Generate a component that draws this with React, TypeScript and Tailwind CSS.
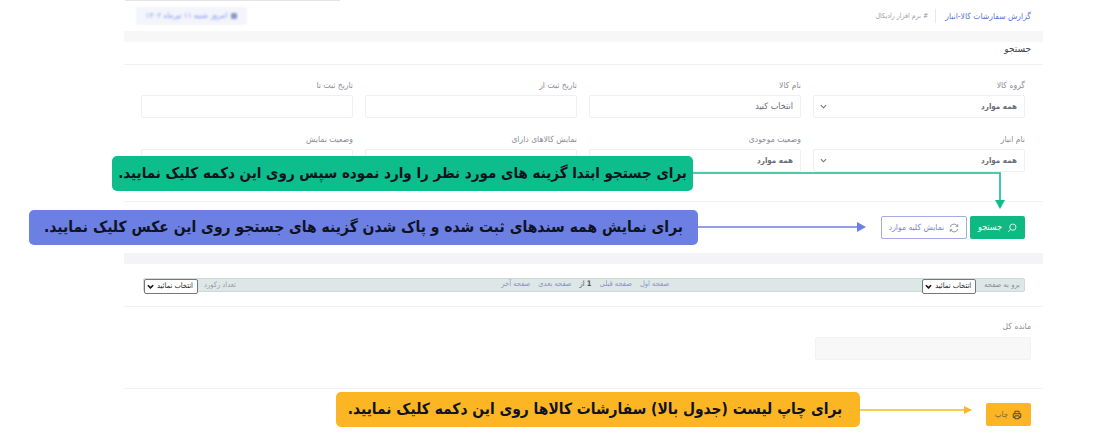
import React from "react";

function Chevron() {
  return (
    <svg width="7" height="5" viewBox="0 0 8 5" fill="none" stroke="#6b7280" strokeWidth="1.2">
      <path d="M1 1l3 3 3-3" />
    </svg>
  );
}

function Field({ label, value, select }: { label: string; value?: string; select?: boolean }) {
  return (
    <div className="flex flex-col">
      <div className="h-[16px] text-[8.5px] leading-[12px] text-[#8b8d97]">{label}</div>
      <div className="flex h-[23px] items-center justify-between rounded-[2px] border border-[#eef0f3] bg-white pr-[7px] pl-[6px] font-medium text-[#6a6d78]">
        <span className={value === "همه موارد" ? "text-[8px] font-bold" : "text-[9px]"}>{value}</span>
        {select && <Chevron />}
      </div>
    </div>
  );
}

function Sel() {
  return (
    <div className="flex h-[15px] w-[54px] items-center justify-between rounded-[2px] border border-[#777] bg-white pr-[4px] pl-[2px] text-[7.5px] whitespace-nowrap text-[#222]">
      <span>انتخاب نمائید</span>
      <svg width="7" height="5" viewBox="0 0 8 5" fill="none" stroke="#111" strokeWidth="1.8"><path d="M1 1l3 3 3-3" /></svg>
    </div>
  );
}

function Arrow({ d, head, color }: { d: string; head: string; color: string }) {
  return (
    <>
      <path d={d} fill="none" stroke={color} strokeWidth="1.6" />
      <path d={head} fill={color} />
    </>
  );
}

function Callout({ className, children }: { className: string; children: React.ReactNode }) {
  return (
    <div className={`absolute flex h-[35px] items-center justify-center rounded-[5px] font-bold whitespace-nowrap text-[#10131f] ${className}`}>
      {children}
    </div>
  );
}

export default function App() {
  return (
    <div
      dir="rtl"
      className="relative h-[433px] w-[1100px] overflow-hidden bg-white font-['DejaVu_Sans_Condensed','DejaVu_Sans',sans-serif]"
    >
      <div className="absolute top-0 left-[125px] h-px w-[215px] bg-[#e4e4e6]" />
      <div className="mr-[57px] ml-[124px] flex flex-col">
        {/* header */}
        <div className="flex h-[31px] items-center justify-between pr-[12px] pl-[12px]">
          <div className="flex items-center pt-[1px]">
            <span className="text-[8.5px] font-medium text-[#5d78d8]">گزارش سفارشات کالا-انبار</span>
            <span className="mr-[9px] ml-[7px] h-[14px] w-px bg-[#e8e9ee]" />
            <span className="text-[7px] text-[#9a9ca6]"># نرم افزار رادیکال</span>
          </div>
          <div className="flex h-[18px] w-[111px] items-center justify-center gap-[4px] rounded-[2px] bg-[#f4f5fb] text-[8px] text-[#7f97ee] blur-[1px]">
            <span className="h-[6px] w-[6px] rounded-[1px] bg-[#8d96c8]" />
            <span>امروز شنبه ۱۱ تیرماه ۱۴۰۲</span>
          </div>
        </div>
        <div className="h-[11px] bg-[#f7f7f8]" />

        {/* search title */}
        <div className="h-[23px] border-b border-[#f1f2f4] pt-[1px] pr-[12px] text-[10px] leading-[12px] font-medium text-[#3f424c]">
          جستجو
        </div>

        {/* fields */}
        <div className="grid grid-cols-[repeat(4,212px)] gap-x-[12px] gap-y-[15px] pt-[14px] pr-[18px] pb-[29px] pl-[17px]">
          <Field label="گروه کالا" value="همه موارد" select />
          <Field label="نام کالا" value="انتخاب کنید" />
          <Field label="تاریخ ثبت از" />
          <Field label="تاریخ ثبت تا" />
          <Field label="نام انبار" value="همه موارد" select />
          <Field label="وضعیت موجودی" value="همه موارد" />
          <Field label="نمایش کالاهای دارای" />
          <Field label="وضعیت نمایش" />
        </div>

        {/* buttons */}
        <div className="flex h-[52px] items-start gap-[3px] border-t border-[#f1f2f4] pt-[14px] pr-[18px]">
          <button className="flex h-[23px] w-[55px] items-center justify-center gap-[5px] rounded-[2px] bg-[#10b981] text-[9px] font-medium text-white">
            <svg width="10" height="10" viewBox="0 0 24 24" fill="none" stroke="white" strokeWidth="2">
              <circle cx="14" cy="10" r="7.5" />
              <path d="M8.5 15.5L3 21" />
            </svg>
            جستجو
          </button>
          <button className="flex h-[23px] w-[86px] items-center justify-center gap-[5px] rounded-[2px] border border-[#a3abe0] bg-white text-[8.5px] text-[#7f88c4]">
            <svg width="10" height="10" viewBox="0 0 24 24" fill="none" stroke="#7c859c" strokeWidth="2">
              <path d="M3 10a9 9 0 0 1 15.5-4.5L21 8M21 3v5h-5M21 14a9 9 0 0 1-15.5 4.5L3 16M3 21v-5h5" />
            </svg>
            نمایش کلیه موارد
          </button>
        </div>

        <div className="h-[11px] bg-[#f4f4f6]" />

        {/* pager */}
        <div className="flex h-[43px] flex-col border-b border-[#f1f2f4] pt-[14px] pr-[18px] pl-[19px]">
          <div className="flex h-[14px] items-center rounded-[2px] border border-[#cfdad8] bg-[#dde7e5] text-[7.5px] text-[#8b93c9]">
            <span className="pr-[4px] pl-[8px] text-[#8a8f98]">برو به صفحه</span>
            <div className="mt-[2px]"><Sel /></div>
            <div className="mr-[253px] flex items-center gap-[8px] pb-[2px]">
              <span>صفحه اول</span>
              <span>صفحه قبلی</span>
              <span className="text-[#555]"><b>1</b> از</span>
              <span>صفحه بعدی</span>
              <span>صفحه آخر</span>
            </div>
            <span className="mr-auto pl-[6px] text-[#9a9ea6]">تعداد رکورد</span>
            <div className="mt-[2px]"><Sel /></div>
          </div>
        </div>

        {/* total */}
        <div className="flex h-[82px] flex-col border-b border-[#f1f2f4] pt-[13px] pr-[12px]">
          <div className="h-[17px] text-[8.5px] leading-[12px] text-[#8b8d97]">مانده کل</div>
          <div className="h-[23px] w-[216px] rounded-[2px] border border-[#f1f2f4] bg-[#f8f8f9]" />
        </div>

        {/* print */}
        <div className="pt-[14px] pr-[12px]">
          <button className="flex h-[23px] w-[45px] items-center justify-center gap-[4px] rounded-[2px] bg-[#fdb623] text-[8px] text-[#6f6650]">
            <svg width="10" height="10" viewBox="0 0 24 24" fill="none" stroke="#4b4a45" strokeWidth="2.4">
              <path d="M7 9V3h10v6M7 18H3v-9h18v9h-4M7 14h10v7H7z" />
            </svg>
            چاپ
          </button>
        </div>
      </div>

      {/* annotation overlay */}
      <svg className="absolute top-0 left-0" width="1100" height="433">
        <Arrow d="M693 173H1000V200" head="M995 200h10l-5 9z" color="#10bd8d" />
        <Arrow d="M698 227H860" head="M857 222l9 5-9 5z" color="#6c7fe2" />
        <Arrow d="M860 410H965" head="M964 406l8 4-8 4z" color="#fdb623" />
      </svg>
      <Callout className="top-[156px] left-[112px] w-[581px] bg-[#0dbd8b] text-[15px]">
        برای جستجو ابتدا گزینه های مورد نظر را وارد نموده سپس روی این دکمه کلیک نمایید.
      </Callout>
      <Callout className="top-[210px] left-[29px] w-[669px] bg-[#6c7fe2] text-[15.5px]">
        برای نمایش همه سندهای ثبت شده و پاک شدن گزینه های جستجو روی این عکس کلیک نمایید.
      </Callout>
      <Callout className="top-[392px] left-[336px] w-[524px] bg-[#fdb623] pr-[6px] text-[15.4px]">
        برای چاپ لیست (جدول بالا) سفارشات کالاها روی این دکمه کلیک نمایید.
      </Callout>
    </div>
  );
}
